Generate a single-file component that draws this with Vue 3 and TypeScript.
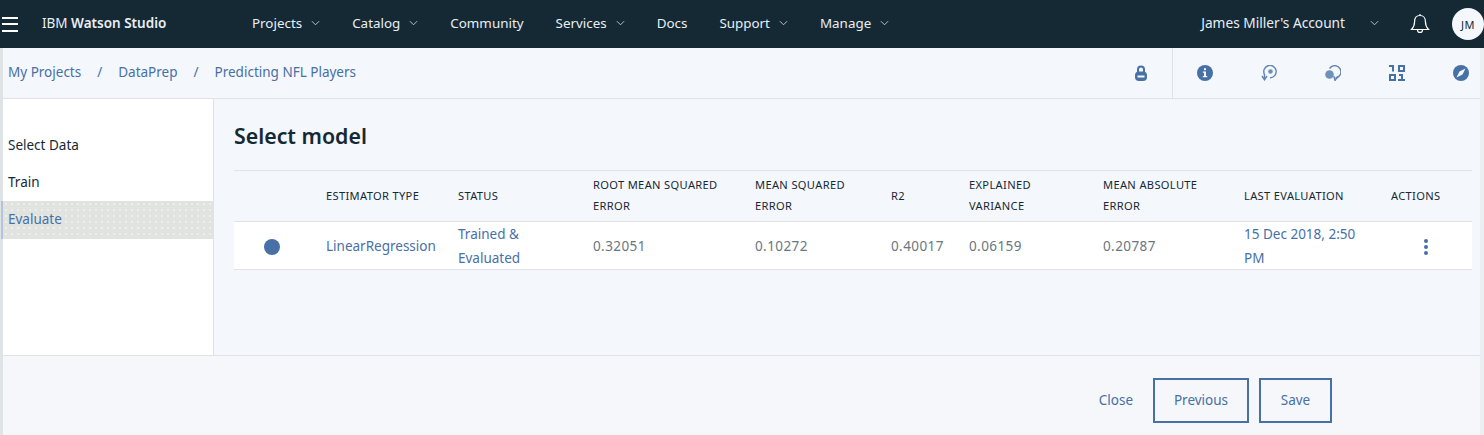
<script setup lang="ts">
type NavItem = { label: string; menu: boolean }

const navItems: NavItem[] = [
  { label: 'Projects', menu: true },
  { label: 'Catalog', menu: true },
  { label: 'Community', menu: false },
  { label: 'Services', menu: true },
  { label: 'Docs', menu: false },
  { label: 'Support', menu: true },
  { label: 'Manage', menu: true },
]

const crumbs = ['My Projects', 'DataPrep', 'Predicting NFL Players']
const steps = ['Select Data', 'Train', 'Evaluate']

const columns = [
  '',
  'ESTIMATOR TYPE',
  'STATUS',
  'ROOT MEAN SQUARED ERROR',
  'MEAN SQUARED ERROR',
  'R2',
  'EXPLAINED VARIANCE',
  'MEAN ABSOLUTE ERROR',
  'LAST EVALUATION',
  'ACTIONS',
]

const metrics = ['0.32051', '0.10272', '0.40017', '0.06159', '0.20787']
</script>

<template>
  <div class="page">
    <header class="topbar">
      <button class="burger" aria-label="Menu"><i /><i /><i /></button>
      <div class="brand">IBM <b>Watson Studio</b></div>
      <nav class="nav">
        <a v-for="item in navItems" :key="item.label" class="nav-item">
          {{ item.label }}
          <svg v-if="item.menu" class="chev" viewBox="0 0 10 6"><path d="M1 1l4 4 4-4" /></svg>
        </a>
      </nav>
      <div class="account">
        <span>James Miller's Account</span>
        <svg class="chev" viewBox="0 0 10 6"><path d="M1 1l4 4 4-4" /></svg>
      </div>
      <svg class="bell" viewBox="0 0 20 22">
        <path d="M10 2.500c-3.600 0-5.400 2.800-5.400 6 0 4-1.200 6-3.100 8h17c-1.900-2-3.100-4-3.100-8 0-3.200-1.800-6-5.400-6z" />
        <path d="M10 1v1.500M7.500 17c0 3.300 5 3.300 5 0" />
      </svg>
      <div class="avatar">JM</div>
    </header>

    <div class="body">
      <div class="subbar">
        <div class="crumbs">
          <template v-for="(crumb, i) in crumbs" :key="crumb">
            <span v-if="i > 0" class="sep">/</span>
            <a>{{ crumb }}</a>
          </template>
        </div>
        <div class="tools">
          <div class="tool-lock">
            <svg class="ico" viewBox="0 0 16 16">
              <path d="M4 7V4.500a4 4 0 0 1 8 0V7h-2V4.500a2 2 0 0 0-4 0V7z" />
              <rect x="2" y="6.500" width="12" height="9.500" rx="4" />
              <rect x="4.500" y="10.500" width="7" height="2" fill="#f4f7fb" />
            </svg>
          </div>
          <div class="tool-group">
            <svg class="ico" viewBox="0 0 16 16">
              <circle cx="8" cy="8" r="8" />
              <rect x="7" y="3.200" width="2" height="2" fill="#f4f7fb" />
              <path d="M5.800 6.500H9v4.500h1.200v1.300H5.800V11H7V7.800H5.800z" fill="#f4f7fb" />
            </svg>
            <svg class="ico" viewBox="0 0 16 16">
              <path class="line" d="M3.500 9.500A6.200 6.200 0 1 1 9 12.800" />
              <path class="line" d="M1 11l2.500 3.800L6 11M3.500 14.500V9" />
              <circle class="soft" cx="9.500" cy="6.500" r="2.300" />
            </svg>
            <svg class="ico" viewBox="0 0 16 16">
              <path class="line" d="M4.500 3.500A6.200 6.200 0 1 1 10.500 13" />
              <path class="line" d="M12.800 11.500L10 15.500l-1.200-4.500" />
              <circle class="soft" cx="4.500" cy="9.500" r="4.300" />
            </svg>
            <svg class="ico" viewBox="0 0 16 16">
              <path d="M0 0h5v6.500H3V2H0zM9 0h7v7H9zm2 2v3h3V2zM0 9h7v7H0zm2 2v3h3v-3zM10 9h4v5h2v2H9v-2h3v-3h-2z" />
            </svg>
            <svg class="ico" viewBox="0 0 16 16">
              <circle cx="8" cy="8" r="8" />
              <path d="M12.500 3.500L9.500 9.500 3.500 12.500 6.500 6.500z" fill="#f4f7fb" />
            </svg>
          </div>
        </div>
      </div>

      <div class="content">
        <aside class="sidebar">
          <a
            v-for="step in steps"
            :key="step"
            class="step"
            :class="{ active: step === 'Evaluate' }"
          >{{ step }}</a>
        </aside>
        <main class="main">
          <h1>Select model</h1>
          <div class="table">
            <div class="row head">
              <div v-for="(col, i) in columns" :key="i" class="cell">{{ col }}</div>
            </div>
            <div class="row data">
              <div class="cell dot-cell"><span class="dot" /></div>
              <div class="cell link">LinearRegression</div>
              <div class="cell link">Trained &amp; Evaluated</div>
              <div v-for="m in metrics" :key="m" class="cell num">{{ m }}</div>
              <div class="cell link">15 Dec 2018, 2:50 PM</div>
              <div class="cell more"><i /><i /><i /></div>
            </div>
          </div>
        </main>
      </div>

      <footer class="footer">
        <a class="close">Close</a>
        <button class="btn prev">Previous</button>
        <button class="btn">Save</button>
      </footer>
    </div>
  </div>
</template>

<style>
body {
  margin: 0;
  background: #f4f7fb;
}
</style>

<style scoped>
.page {
  width: 1484px;
  height: 435px;
  overflow: hidden;
  font-family: "Noto Sans", "Open Sans", sans-serif;
  font-size: 13.500px;
  color: #152935;
}

.topbar {
  height: 48px;
  background: #152935;
  color: #e8eef5;
  display: flex;
  align-items: center;
}

.burger {
  width: 16px;
  height: 15px;
  margin-left: 2px;
  padding: 0;
  border: 0;
  background: none;
  display: flex;
  flex-direction: column;
  justify-content: space-between;
}

.burger i {
  display: block;
  height: 2px;
  background: #fff;
}

.brand {
  margin-left: 24px;
  padding-bottom: 3px;
  width: 210px;
  font-size: 13.500px;
  white-space: nowrap;
}

.brand b {
  font-weight: 600;
}

.nav {
  display: flex;
  gap: 32px;
  padding-bottom: 3px;
}

.nav-item {
  display: flex;
  align-items: center;
  gap: 9px;
  font-size: 13.400px;
}

.chev {
  width: 9px;
  height: 6px;
  fill: none;
  stroke: #c3d0de;
  stroke-width: 1;
}

.account {
  margin-left: auto;
  padding-bottom: 3px;
  display: flex;
  align-items: center;
  gap: 25px;
  font-size: 13.700px;
}

.bell {
  width: 20px;
  height: 22px;
  margin-left: 31px;
  fill: none;
  stroke: #fff;
  stroke-width: 1.200;
}

.avatar {
  width: 32px;
  height: 32px;
  margin-left: 22px;
  border-radius: 50%;
  background: #f4f7fb;
  color: #152935;
  font-size: 11px;
  letter-spacing: 0.5px;
  display: flex;
  align-items: center;
  justify-content: center;
}

.body {
  height: 387px;
  display: flex;
  flex-direction: column;
  border-left: 3px solid #dfe3e6;
  border-right: 4px solid #eceff2;
  background: #f4f7fb;
}

.subbar {
  height: 51px;
  flex: none;
  box-sizing: border-box;
  border-bottom: 1px solid #dfe3e6;
  display: flex;
  align-items: stretch;
  justify-content: space-between;
  color: #4770a6;
}

.crumbs {
  display: flex;
  align-items: center;
  padding: 0 0 3px 5px;
  font-size: 13.500px;
}

.sep {
  margin: 0 16px;
}

.tools {
  display: flex;
}

.tool-lock {
  width: 39px;
  display: flex;
  align-items: center;
  border-right: 1px solid #dfe3e6;
}

.tool-group {
  display: flex;
  align-items: center;
  gap: 48px;
  padding: 0 11px 0 24px;
}

.ico {
  width: 16px;
  height: 16px;
  fill: #4770a6;
}

.line {
  fill: none;
  stroke: #6385b3;
  stroke-width: 1.400;
}

.soft {
  fill: #7090ba;
}

.content {
  height: 256px;
  flex: none;
  display: flex;
}

.sidebar {
  width: 210px;
  flex: none;
  box-sizing: border-box;
  background: #fff;
  padding-top: 28px;
  display: flex;
  flex-direction: column;
}

.step {
  height: 37px;
  padding: 0 0 2px 5px;
  box-sizing: border-box;
  display: flex;
  align-items: center;
  font-size: 13.500px;
}

.step.active {
  height: 38px;
  background-color: #e0e3e0;
  background-image: radial-gradient(circle, #eef0ee 0.7px, transparent 0.8px);
  background-size: 6px 6px;
  box-shadow: -2px 0 0 #b3c4dc;
  color: #4770a6;
}

.main {
  flex: 1;
  border-left: 1px solid #dfe3e6;
  padding: 0 0 0 20px;
}

h1 {
  margin: 24px 0 21px;
  font-size: 21.300px;
  line-height: 26px;
  font-weight: 600;
}

.table {
  width: 1238px;
  border-top: 1px solid #dfe3e6;
}

.row {
  display: grid;
  grid-template-columns: 92px 132px 135px 162px 136px 78px 134px 141px 147px 81px;
  align-items: center;
  border-bottom: 1px solid #dfe3e6;
}

.head {
  height: 50px;
  font-size: 11.100px;
  letter-spacing: 0.35px;
  line-height: 21px;
}

.head .cell {
  padding-bottom: 2px;
}

.data {
  height: 47px;
  background: #fff;
  font-size: 13.500px;
  line-height: 24px;
  color: #6a7780;
}

.cell {
  padding-right: 20px;
}

.data .cell:not(.dot-cell):not(.more) {
  padding-bottom: 2px;
}

.num {
  letter-spacing: 0.4px;
}

.link {
  color: #4770a6;
}

.dot-cell {
  padding-left: 30px;
  display: flex;
}

.dot {
  width: 16px;
  height: 16px;
  border-radius: 50%;
  background: #4770a6;
}

.more {
  display: flex;
  flex-direction: column;
  gap: 2px;
  padding-left: 33px;
}

.more i {
  width: 4px;
  height: 4px;
  border-radius: 50%;
  background: #4770a6;
}

.footer {
  flex: 1;
  border-top: 1px solid #dfe3e6;
  display: flex;
  align-items: center;
  justify-content: flex-end;
  padding: 10px 148px 0 0;
  color: #4770a6;
  background: #f5f7fb;
}

.close {
  font-size: 13.500px;
  margin-right: 20px;
  padding-bottom: 2px;
}

.btn {
  height: 45px;
  width: 73px;
  border: 2px solid #4770a6;
  background: none;
  color: #4770a6;
  font: inherit;
  font-size: 13.500px;
  margin-left: 10px;
  padding: 0 0 2px;
}

.btn.prev {
  width: 96px;
  margin-left: 0;
}
</style>
